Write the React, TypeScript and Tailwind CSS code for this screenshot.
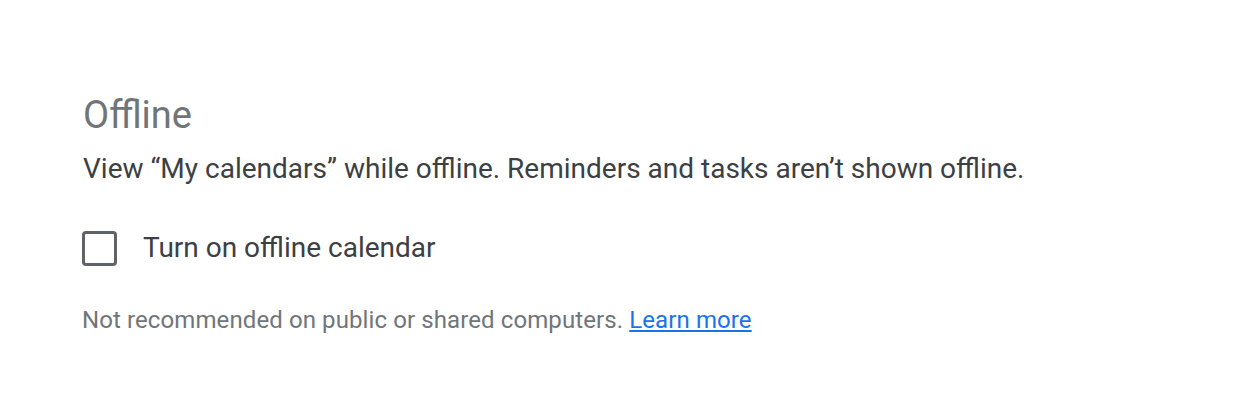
export default function App() {
  return (
    <div className="w-[1254px] h-[420px] bg-white pl-[82px] pt-[93px]" style={{ fontFamily: "Roboto, 'Liberation Sans', sans-serif" }}>
      <h2 className="text-[38px] leading-[44px] text-[#70757a] font-normal pl-[1px]">Offline</h2>
      <p className="mt-[14px] text-[28px] leading-[36px] text-[#3c4043] pl-[1px]">
        View “My calendars” while offline. Reminders and tasks aren’t shown offline.
      </p>
      <label className="mt-[43px] flex items-center gap-[26px]">
        <span className="w-[35px] h-[35px] rounded-[4px] border-[3px] border-[#5f6368] box-border" />
        <span className="text-[28px] leading-[36px] text-[#3c4043]">Turn on offline calendar</span>
      </label>
      <p className="mt-[38px] text-[24px] leading-[32px] tracking-[0.1px] text-[#70757a]">
        Not recommended on public or shared computers.{" "}
        <a href="#" className="text-[#1a73e8] underline">Learn more</a>
      </p>
    </div>
  );
}
